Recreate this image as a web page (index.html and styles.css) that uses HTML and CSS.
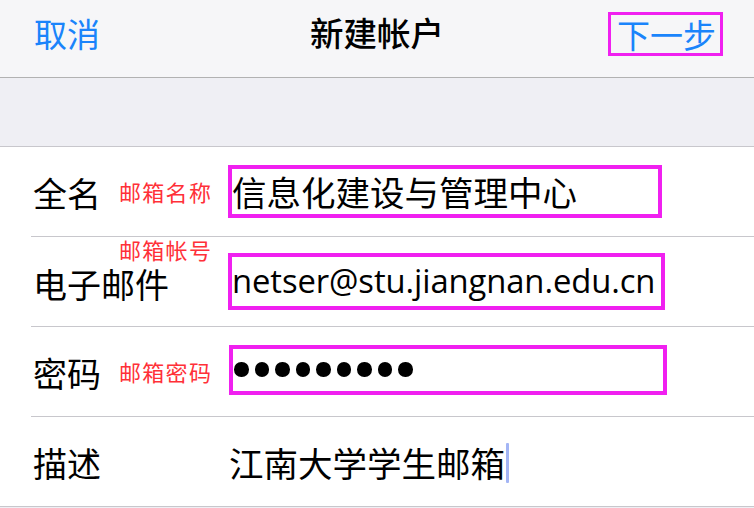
FILE: index.html
```html
<!DOCTYPE html>
<html lang="zh-CN">
<head>
<meta charset="utf-8">
<link rel="stylesheet" href="styles.css">
</head>
<body>
<div class="screen">
  <header class="nav">
    <span class="nav-left">取消</span>
    <span class="nav-title">新建帐户</span>
    <span class="nav-right"><span class="hl-nav">下一步</span></span>
  </header>
  <div class="band"></div>
  <div class="list">
    <div class="row">
      <span class="label">全名</span>
      <span class="note note-mid">邮箱名称</span>
      <div class="value box box1">信息化建设与管理中心</div>
    </div>
    <div class="row">
      <span class="label label-low">电子邮件</span>
      <span class="note note-top">邮箱帐号</span>
      <div class="value box box2 latin">netser@stu.jiangnan.edu.cn</div>
    </div>
    <div class="row">
      <span class="label">密码</span>
      <span class="note note-mid">邮箱密码</span>
      <div class="value box box3"><span class="dots"><i></i><i></i><i></i><i></i><i></i><i></i><i></i><i></i><i></i></span></div>
    </div>
    <div class="row last">
      <span class="label">描述</span>
      <div class="value plain">江南大学学生邮箱<span class="caret"></span></div>
    </div>
  </div>
</div>
</body>
</html>
```

FILE: styles.css
```css
html, body {
  margin: 0;
  padding: 0;
  background: #efeff4;
}
.screen {
  width: 754px;
  height: 508px;
  overflow: hidden;
  font-family: "Noto Sans CJK SC", "Noto Sans", sans-serif;
  background: #efeff4;
}
.nav {
  background: #f6f6f8;
  border-bottom: 1px solid #b2b2b2;
  display: flex;
  align-items: center;
  justify-content: space-between;
  position: relative;
  padding: 0 31px 12px 34px;
  box-sizing: border-box;
  height: 78px;
  font-size: 33px;
}
.nav-left {
  color: #1a84fb;
  line-height: 34px;
}
.nav-title {
  position: absolute;
  left: 0;
  right: 0;
  top: 15px;
  text-align: center;
  color: #000;
  font-weight: 500;
  font-size: 33.5px;
  line-height: 34px;
  pointer-events: none;
}
.nav-right {
  color: #1a84fb;
  line-height: 34px;
}
.hl-nav {
  display: inline-block;
  border: 3px solid #f020f0;
  padding: 2px 4px 2px 6px;
  line-height: 34px;
  margin-top: 2px;
}
.band {
  height: 68px;
  border-bottom: 1px solid #c8c7cc;
}
.list {
  background: #fff;
}
.row {
  position: relative;
  height: 89px;
  display: flex;
  align-items: center;
  margin-left: 31px;
  border-bottom: 1px solid #c8c7cc;
}
.row.last {
  margin-left: 0;
  padding-left: 31px;
}
.label {
  width: 195px;
  padding-left: 2px;
  font-size: 34px;
  color: #000;
  line-height: 30px;
  flex: none;
  margin-top: 2px;
}
.label-low {
  margin-top: 4px;
}
.note {
  position: absolute;
  left: 88px;
  font-size: 22px;
  color: #ff3038;
  line-height: 22px;
  letter-spacing: 1.3px;
}
.note-mid {
  top: 33px;
}
.note-top {
  top: 1px;
}
.value {
  font-size: 34px;
  color: #000;
  line-height: 1;
}
.box {
  border: 4px solid #f020f0;
  box-sizing: border-box;
  display: flex;
  align-items: center;
  padding-left: 0;
}
.box1 {
  width: 434px;
  height: 53px;
  margin-top: -1px;
  font-size: 34.5px;
}
.box2 {
  width: 437px;
  height: 57px;
  padding-left: 0;
}
.box3 {
  width: 438px;
  height: 50px;
  margin-top: -4px;
  margin-left: 1px;
  padding-left: 1px;
}
.latin {
  font-family: "Open Sans", "Liberation Sans", sans-serif;
  font-size: 32.8px;
  letter-spacing: -0.1px;
}
.dots {
  display: flex;
  gap: 6px;
}
.dots i {
  display: block;
  width: 14.5px;
  height: 14.5px;
  border-radius: 50%;
  background: #000;
}
.plain {
  padding-left: 1px;
  font-size: 34.5px;
  display: flex;
  align-items: center;
  margin-top: 2px;
}
.caret {
  display: inline-block;
  width: 3px;
  height: 40px;
  background: #a3b5f5;
  border-radius: 1px;
  margin-left: 1px;
}
```
